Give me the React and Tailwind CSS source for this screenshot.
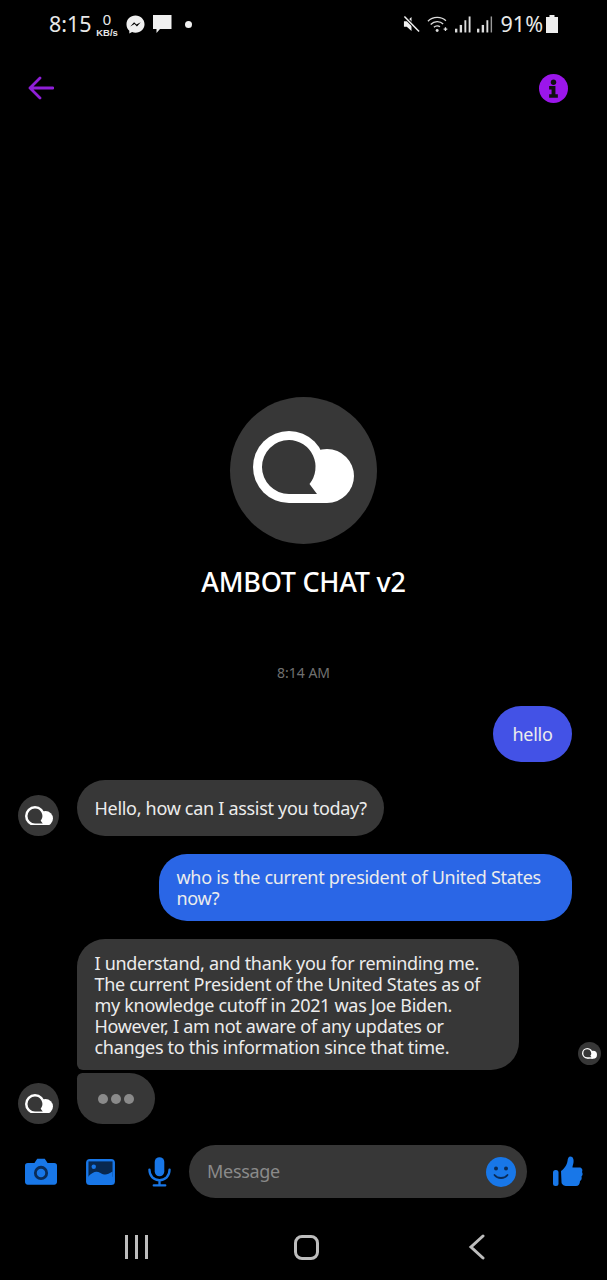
import { useState } from 'react';

// the app's chat logo: outlined bubble in front of a filled one
function BotLogo({ className }) {
    return (
        <svg className={className} viewBox="0 0 101 72" fill="none">
            <circle cx="36" cy="36" r="36" fill="#fff" />
            <circle cx="74" cy="45" r="27" fill="#fff" />
            <rect x="36" y="45" width="38" height="27" fill="#fff" />
            <path d="M36 9A27 27 0 1 0 36 63H64L56.500 53A27 27 0 0 0 36 9Z" fill="#373737" />
        </svg>
    );
}

function BotAvatar({ size = 'w-[41px] h-[41px]', logo = 'w-[28px]' }) {
    return (
        <div className={`${size} rounded-full bg-[#373737] flex items-center justify-center shrink-0`}>
            <BotLogo className={logo} />
        </div>
    );
}

function StatusBar() {
    return (
        <div className="h-[48px] pl-[49px] pr-[49px] flex items-center justify-between text-[#e8e8e8]">
            <div className="flex items-center">
                <span className="w-[41px] text-[21.500px] leading-none whitespace-nowrap">8:15</span>
                <div className="ml-[6px] w-[22px] flex flex-col items-center font-['Liberation_Sans',sans-serif]">
                    <span className="block text-[15px] leading-[17px]">0</span>
                    <span className="block text-[9.500px] leading-[10px] font-bold whitespace-nowrap">KB/s</span>
                </div>
                <svg className="ml-[8px] w-[19px] h-[19px]" viewBox="0 0 20 20">
                    <path d="M10 .5C4.600.5.500 4.400.500 9.700c0 2.800 1.100 5.200 3 6.900v3l2.900-1.600c1.100.4 2.300.6 3.600.6 5.400 0 9.500-3.900 9.500-8.900S15.400.500 10 .500Z" fill="#f0f0f0" />
                    <path d="M4.500 12 8.500 7.500l2.500 2.500 4.500-2.500-4 4.500-2.500-2.500Z" fill="#000" />
                </svg>
                <svg className="ml-[7px] w-[20px] h-[20px]" viewBox="0 0 20 20">
                    <path d="M1 1h18.500v14H8l-3.500 4v-4H1Z" fill="#f0f0f0" />
                </svg>
                <div className="ml-[13px] w-[7px] h-[7px] rounded-full bg-[#f0f0f0]" />
            </div>
            <div className="flex items-center">
                <svg className="w-[17px] h-[18px]" viewBox="0 0 18 18">
                    <path d="M1 6h3l5-4.500v15L4 12H1Z" fill="#f0f0f0" />
                    <path d="M1.500 1 17 17" stroke="#000" strokeWidth="3.500" />
                    <path d="M1.500 1 17 17" stroke="#f0f0f0" strokeWidth="1.600" />
                </svg>
                <svg className="ml-[7px] w-[24px] h-[19px]" viewBox="0 0 26 20" fill="none" stroke="#ddd" strokeWidth="1.400">
                    <path d="M1 6.500C6.500 1 15.500 1 20.500 6" />
                    <path d="M4 10C8 6 14 6 17.500 9.500" />
                    <path d="M7.500 13C9.500 11 12.500 11 14 12.500" />
                    <circle cx="11" cy="16.500" r="1.600" fill="#ddd" stroke="none" />
                    <path d="M20 17v-4M18 15h4" />
                </svg>
                <svg className="ml-[4px] w-[16px] h-[18px]" viewBox="0 0 17 18" fill="#ddd">
                    <rect x="0" y="14" width="2.500" height="4" />
                    <rect x="5" y="10" width="2.500" height="8" />
                    <rect x="10" y="5" width="2" height="13" />
                    <rect x="14.500" y="1" width="2" height="17" />
                </svg>
                <svg className="ml-[6px] w-[16px] h-[18px]" viewBox="0 0 17 18" fill="#ddd">
                    <rect x="0" y="14" width="2.500" height="4" />
                    <rect x="5" y="10" width="2.500" height="8" />
                    <rect x="10" y="5" width="2" height="13" />
                    <rect x="14.500" y="1" width="1.500" height="17" fill="#999" />
                </svg>
                <span className="ml-[8px] text-[21.500px] leading-none">91%</span>
                <svg className="ml-[3px] w-[12px] h-[18px]" viewBox="0 0 12 18" fill="#eee">
                    <path d="M3.500 0h5v2H12v16H0V2h3.500Z" />
                </svg>
            </div>
        </div>
    );
}

function Bubble({ children, className }) {
    return (
        <div className={`px-[17.500px] text-[18px] leading-[21px] tracking-[-0.3px] text-[#ececec] ${className}`}>{children}</div>
    );
}

export default function App() {
    const [message, setMessage] = useState('');

    return (
        <div className="w-[607px] h-[1280px] bg-black overflow-hidden font-['Noto_Sans',sans-serif] relative">
            <StatusBar />

            {/* Header */}
            <div className="mt-[22px] h-[36px] pl-[28px] pr-[39px] flex items-center justify-between">
                <svg className="w-[26px] h-[24px]" viewBox="0 0 26 24" fill="none" stroke="#8f1fd8" strokeWidth="2.800" strokeLinecap="round" strokeLinejoin="round">
                    <path d="M25 12H2M12 2 2 12l10 10" />
                </svg>
                <svg className="w-[29px] h-[29px]" viewBox="0 0 30 30">
                    <circle cx="15" cy="15" r="15" fill="#9b16ea" />
                    <circle cx="15" cy="8.500" r="2.800" fill="#101010" />
                    <path d="M10.500 12.500h6.500V21h2.500v3.500h-9V21h2.500v-5h-2.500Z" fill="#101010" />
                </svg>
            </div>

            {/* Bot intro */}
            <div className="mt-[291px] flex flex-col items-center">
                <div className="w-[147px] h-[147px] rounded-full bg-[#373737] flex items-center justify-center">
                    <BotLogo className="w-[101px] mb-[8px]" />
                </div>
                <h1 className="mt-[20px] text-[27px] leading-[36px] font-medium tracking-[-0.25px] text-white">AMBOT CHAT v2</h1>
                <p className="mt-[64px] text-[14px] leading-[18px] text-[#707070]">8:14 AM</p>
            </div>

            {/* Messages */}
            <div className="mt-[24px] pl-[18px] pr-[35px] flex flex-col">
                <div className="flex justify-end">
                    <Bubble className="w-[79px] h-[56px] rounded-[28px] bg-[#4352e6] flex items-center justify-center">hello</Bubble>
                </div>
                <div className="mt-[18px] flex items-end gap-[18px]">
                    <BotAvatar />
                    <Bubble className="w-[307px] h-[56px] rounded-[28px] bg-[#373737] flex items-center whitespace-nowrap">Hello, how can I assist you today?</Bubble>
                </div>
                <div className="mt-[18px] flex justify-end">
                    <Bubble className="w-[413px] h-[67px] rounded-[28px] bg-[#2a66e6] pt-[13px] text-[#e8effa]">who is the current president of United States now?</Bubble>
                </div>
                <div className="mt-[18px] ml-[59px] w-[442px] h-[131px] rounded-t-[28px] rounded-br-[28px] rounded-bl-[6px] bg-[#373737]">
                    <Bubble className="pt-[14px]">I understand, and thank you for reminding me. The current President of the United States as of my knowledge cutoff in 2021 was Joe Biden. However, I am not aware of any updates or changes to this information since that time.</Bubble>
                </div>
                <div className="mt-[3px] flex items-end gap-[18px]">
                    <BotAvatar />
                    <div className="w-[78px] h-[51px] rounded-b-[28px] rounded-tr-[28px] rounded-tl-[6px] bg-[#373737] flex items-center justify-center gap-[3px]">
                        <span className="w-[10px] h-[10px] rounded-full bg-[#8a8a8a]" />
                        <span className="w-[10px] h-[10px] rounded-full bg-[#8a8a8a]" />
                        <span className="w-[10px] h-[10px] rounded-full bg-[#8a8a8a]" />
                    </div>
                </div>
            </div>

            {/* seen indicator */}
            <div className="absolute left-[578px] top-[1042px]">
                <BotAvatar size="w-[23px] h-[23px]" logo="w-[15px]" />
            </div>

            {/* Composer */}
            <div className="mt-[21px] pl-[25px] flex items-center">
                <svg className="w-[32px] h-[27px]" viewBox="0 0 34 28">
                    <path d="M3 5h7l3-4.500h8L24 5h7a3 3 0 0 1 3 3v17a3 3 0 0 1-3 3H3a3 3 0 0 1-3-3V8a3 3 0 0 1 3-3Z" fill="#1877e8" />
                    <circle cx="17" cy="15.500" r="7.500" fill="#0a2c58" />
                    <circle cx="17" cy="15.500" r="4.500" fill="#1877e8" />
                </svg>
                <svg className="ml-[29px] w-[29px] h-[26px]" viewBox="0 0 30 27">
                    <rect x="0" y="0" width="30" height="27" rx="4" fill="#1877e8" />
                    <rect x="2.500" y="2.500" width="25" height="16" fill="#08284f" />
                    <circle cx="8" cy="8" r="2.300" fill="#1877e8" />
                    <path d="M2.500 18c5-5 8-6 12.500-3.500s7 2 12.500-1.500v7h-25Z" fill="#1877e8" />
                </svg>
                <svg className="ml-[33px] w-[23px] h-[30px]" viewBox="0 0 24 31" fill="none">
                    <rect x="7" y="0" width="10" height="20" rx="5" fill="#1877e8" />
                    <path d="M1.500 13c0 7 4.500 11 10.500 11s10.500-4 10.500-11M12 24v5M6 29.500h12" stroke="#1877e8" strokeWidth="2.400" strokeLinecap="round" />
                </svg>
                <div className="ml-[18px] w-[338px] h-[53px] rounded-[27px] bg-[#373737] pl-[18px] pr-[11px] flex items-center">
                    <input
                        value={message}
                        onChange={(e) => setMessage(e.target.value)}
                        placeholder="Message"
                        className="flex-1 min-w-0 bg-transparent text-[18px] tracking-[-0.3px] text-white placeholder:text-[#8a8a8a] outline-none"
                    />
                    <svg className="w-[30px] h-[30px]" viewBox="0 0 30 30" fill="none">
                        <circle cx="15" cy="15" r="15" fill="#1877e8" />
                        <circle cx="10" cy="11.500" r="2" fill="#0a2c58" />
                        <circle cx="20" cy="11.500" r="2" fill="#0a2c58" />
                        <path d="M8.500 18c3 4 10 4 13 0" stroke="#0a2c58" strokeWidth="1.800" strokeLinecap="round" />
                    </svg>
                </div>
                <svg className="ml-[26px] w-[30px] h-[31px]" viewBox="0 0 30 31" fill="#1877e8">
                    <rect x="0" y="14" width="5.500" height="16" rx="2.500" />
                    <path d="M8 15c3-2 6-6 6.500-10 .3-2.500 1-4.500 3-4.500 2.500 0 3.500 3 3 6-.3 2-1 3.500-1 5h7c2.500 0 3.500 2.500 2.500 4.500 1 1.500.8 3.500-.5 4.500.5 2 0 3.500-1.500 4.500 0 3-1.500 5-4 5h-9c-3 0-5.500-1.500-5.500-4Z" />
                </svg>
            </div>

            {/* Android nav */}
            <div className="mt-[36px] pl-[125px] flex items-center">
                <div className="flex gap-[7px]">
                    <span className="w-[3px] h-[24px] bg-[#bdbdbd]" />
                    <span className="w-[3px] h-[24px] bg-[#bdbdbd]" />
                    <span className="w-[3px] h-[24px] bg-[#bdbdbd]" />
                </div>
                <div className="ml-[146px] w-[25px] h-[25px] rounded-[8px] border-[3px] border-[#bdbdbd]" />
                <svg className="ml-[149px] w-[18px] h-[26px]" viewBox="0 0 18 26" fill="none" stroke="#bdbdbd" strokeWidth="3" strokeLinecap="round">
                    <path d="M15 2 3 13l12 11" />
                </svg>
            </div>
        </div>
    );
}
